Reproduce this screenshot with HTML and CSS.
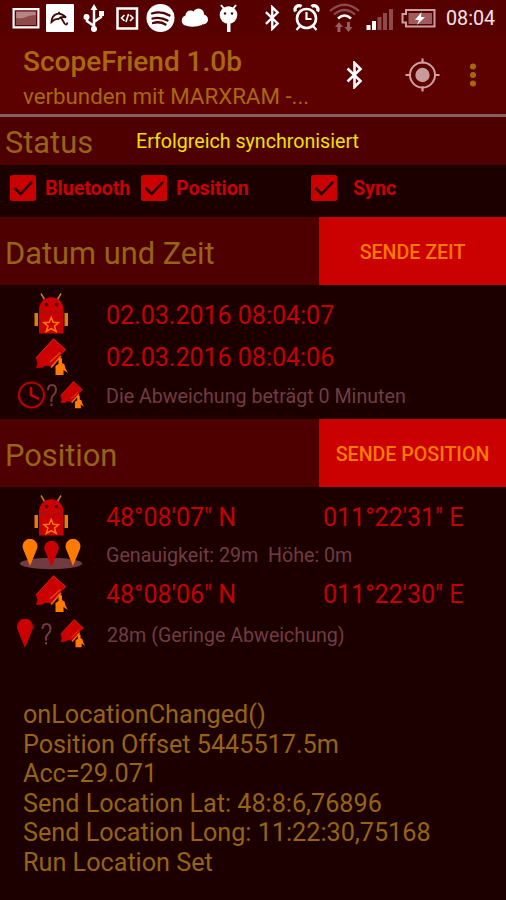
FILE: index.html
```html
<!DOCTYPE html>
<html lang="de">
<head>
<meta charset="utf-8">
<title>ScopeFriend</title>
<link rel="stylesheet" href="styles.css">
</head>
<body>
<svg class="defs" width="0" height="0">
  <symbol id="robot" viewBox="0 0 34 42">
    <path d="M7 1l3.500 6M27 1l-3.500 6" stroke="#c87a20" stroke-width="1.500"/>
    <path d="M5 17a12.200 12.200 0 0 1 24.500 0v24H5z" fill="#cb0000"/>
    <path d="M5 18q12 5 24.500 0" fill="none" stroke="#8c1c1c" stroke-width="1.200"/>
    <circle cx="12.500" cy="12" r="1.700" fill="#3a0000"/><circle cx="22.500" cy="12" r="1.700" fill="#3a0000"/>
    <path d="M.5 20.500h3.500v13H.5zM30.500 20.500H34v13h-3.500z" fill="#e07c10"/>
    <path d="M17.200 25l2 4.800 5.300.3-4 3.500 1.600 5.400-4.900-2.800-4.900 2.800 1.600-5.400-4-3.500 5.300-.3z" fill="none" stroke="#ff7a00" stroke-width="1.500"/>
  </symbol>
  <symbol id="scope" viewBox="0 0 33 38">
    <path d="M18.500.8L30.500 11.500 16.500 28.500 10.500 27.500 7.500 29.500 1 30 2.500 25 1 20z" fill="#cb0000"/>
    <path d="M1 20L18.500.8 30.500 11.500 28 14.500" fill="none" stroke="#dc2808" stroke-width="1"/>
    <path d="M25.500 14.500L15 24" stroke="#e84a10" stroke-width="1.200"/>
    <path d="M16 29.500L26 18" stroke="#e86a10" stroke-width="1.800"/>
    <path d="M23.500 19.500l3.500 1v4.500l2.500 1.500 1 4 2.500 4.500-4.500-3v5H20.500v-9l3-2z" fill="#ff7a00"/>
  </symbol>
  <symbol id="bt" viewBox="0 0 16 28">
    <path d="M1 7.500L14 20 8 26V2l6 6L1 20.500" fill="none" stroke="#fff" stroke-width="2.600"/>
  </symbol>
  <symbol id="pin" viewBox="0 0 16 29">
    <path d="M8 29L.9 11.500A8 8 0 1 1 15.100 11.500z"/>
  </symbol>
</svg>
<main class="screen">
  <div class="statusbar">
    <svg width="43" height="36" viewBox="0 0 43 36"><path d="M13.500 9h25v18.500h-25z" fill="#b98484" stroke="#fff" stroke-width="2"/><path d="M15.500 11h21v14.500h-21z" fill="none" stroke="#600000" stroke-width="1.200"/><path d="M16 18q6 1 10-1t10-2v10H16z" fill="#8c4c4c"/></svg>
    <svg width="35" height="36" viewBox="43 0 35 36"><rect x="46" y="4" width="28" height="28" rx="1" fill="#fff"/><path d="M51.500 22C52 14 59 10.500 66 17.500Q61 16 58.500 19 55 18.500 51.500 22zM58.500 12l1.500 2M61 17.500l3.500 6q2.200 2.500 3-1" fill="none" stroke="#3c0a0a" stroke-width="1.800"/></svg>
    <svg width="32" height="36" viewBox="78 0 32 36"><path d="M94 8v21M94 26l-7-5v-6M94 22l7-5v-4" fill="none" stroke="#fff" stroke-width="2.500"/><path d="M90.500 10L94 4l3.500 6z" fill="#fff"/><circle cx="94" cy="29" r="3" fill="#fff"/><circle cx="86.500" cy="17" r="3" fill="#fff"/><path d="M99 11h5v5h-5z" fill="#fff"/></svg>
    <svg width="32" height="36" viewBox="110 0 32 36"><path d="M117.500 8.500h19.500v20h-19.500z" fill="none" stroke="#fff" stroke-width="2.500"/><path d="M124.500 15l-3 3 3 3M130 15l3 3-3 3M128.500 14l-2.500 8" fill="none" stroke="#fff" stroke-width="1.600"/></svg>
    <svg width="36" height="36" viewBox="142 0 36 36"><circle cx="160.500" cy="18" r="14" fill="#fff"/><path d="M152 13.500q9-3 17.500 2M152.500 18.500q8-2 15 2M153 23q7-2 12.500 1.500" fill="none" stroke="#500000" stroke-width="2.300" stroke-linecap="round"/></svg>
    <svg width="36" height="36" viewBox="178 0 36 36"><g fill="#fff"><circle cx="187" cy="20.500" r="5.300"/><circle cx="190.500" cy="15.500" r="5"/><circle cx="198.500" cy="14" r="5.500"/><circle cx="203" cy="19.500" r="5"/><path d="M186 16h16v9q-8 3-15 1z"/></g></svg>
    <svg width="34" height="36" viewBox="214 0 34 36"><path d="M221 5l4 5M236 5l-4 5" stroke="#fff" stroke-width="2"/><circle cx="228.500" cy="15" r="8.800" fill="#fff"/><path d="M227 22h3.500v10H227z" fill="#fff"/><circle cx="225" cy="13.500" r="1.200" fill="#500000"/><circle cx="232" cy="13.500" r="1.200" fill="#500000"/></svg>
    <svg width="39" height="36" viewBox="248 0 39 36"><use href="#bt" x="265" y="5" width="14.500" height="26"/></svg>
    <svg width="37" height="36" viewBox="287 0 37 36"><circle cx="306.500" cy="18.500" r="9.500" fill="none" stroke="#fff" stroke-width="2.600"/><path d="M306.500 12v7h5M300 26l-3.500 4M313 26l3.500 4" fill="none" stroke="#fff" stroke-width="2.200"/><path d="M295.500 11.500a4 4 0 0 1 6-5M317.500 11.500a4 4 0 0 0-6-5" fill="none" stroke="#fff" stroke-width="3.200"/></svg>
    <svg width="38" height="36" viewBox="324 0 38 36"><g fill="none" stroke="#8d4a4a" stroke-width="2.200"><path d="M330 11q14.500-12.500 29 0M334 14.500q10.500-9 21 0"/></g><path d="M338 18.500q6.500-6 13 0" fill="none" stroke="#fff" stroke-width="2.500"/><path d="M335 27l4-5 4 5h-2.500v5h-3v-5zM344.500 27l4 5 4-5H350v-5h-3v5z" fill="#9a5c5c"/></svg>
    <svg width="35" height="36" viewBox="362 0 35 36"><path d="M366.500 25h4v5h-4zM372 21h4v9h-4z" fill="#fff"/><path d="M377.500 17h4v13h-4zM383 13h4v17h-4zM389 9h4v21h-4z" fill="#8d4a4a"/></svg>
    <svg width="43" height="36" viewBox="397 0 43 36"><path d="M406 10h28.500v16.500H406v-4h-3.500v-8.500h3.500z" fill="none" stroke="#c8a0a0" stroke-width="2"/><path d="M408.500 13h23.500v11h-23.500z" fill="#a05c5c"/><path d="M421.500 12l-6.500 8h4l-2 5 8-8h-4z" fill="#fff"/></svg>
    <time class="clock">08:04</time>
  </div>
  <header class="appbar">
    <div class="titles"><h1>ScopeFriend 1.0b</h1><p>verbunden mit MARXRAM -...</p></div>
    <svg width="186" height="77" viewBox="320 36 186 77">
      <use href="#bt" x="346" y="61" width="17" height="28"/>
      <g fill="none" stroke="#d0a0a0"><circle cx="422.500" cy="75" r="12.500" stroke-width="2"/><path d="M422.500 58.500v5M422.500 86.500v5M405.500 75h5M434.500 75h5" stroke-width="2.200"/></g><circle cx="422.500" cy="75" r="7.200" fill="#c99a9a"/>
      <g fill="#a8690c"><circle cx="473" cy="66.500" r="3"/><circle cx="473" cy="75" r="3"/><circle cx="473" cy="83.500" r="3"/></g>
    </svg>
  </header>
  <section class="status"><h2>Status</h2><span>Erfolgreich synchronisiert</span></section>
  <div class="checks">
    <div class="check"><svg class="box" viewBox="0 0 26 26"><rect width="26" height="26" rx="2.500" fill="#cb0000"/><path d="M4.500 13l6 6L22 7" fill="none" stroke="#1c0000" stroke-width="2.500"/></svg><span>Bluetooth</span></div>
    <div class="check"><svg class="box" viewBox="0 0 26 26"><rect width="26" height="26" rx="2.500" fill="#cb0000"/><path d="M4.500 13l6 6L22 7" fill="none" stroke="#1c0000" stroke-width="2.500"/></svg><span>Position</span></div>
    <div class="check sync"><svg class="box" viewBox="0 0 26 26"><rect width="26" height="26" rx="2.500" fill="#cb0000"/><path d="M4.500 13l6 6L22 7" fill="none" stroke="#1c0000" stroke-width="2.500"/></svg><span>Sync</span></div>
  </div>
  <section class="bar"><h2>Datum und Zeit</h2><button>SENDE ZEIT</button></section>
  <div class="row first"><svg width="106" height="51" viewBox="0 285 106 51"><use href="#robot" x="34" y="292.500" width="34" height="42"/></svg><span class="value">02.03.2016 08:04:07</span></div>
  <div class="row"><svg width="106" height="42" viewBox="0 336 106 42"><use href="#scope" x="35" y="338" width="33" height="38"/></svg><span class="value">02.03.2016 08:04:06</span></div>
  <div class="row diff"><svg width="106" height="41" viewBox="0 378 106 41"><circle cx="31.500" cy="395" r="12.500" fill="none" stroke="#b80000" stroke-width="2.200"/><path d="M31 387v8l8 4" fill="none" stroke="#cb0000" stroke-width="2.500"/><path d="M48 390q0-5 4-5t4 5q0 3-2.500 5t-2 7M51.500 403.500v2.500" fill="none" stroke="#703c42" stroke-width="2"/><use href="#scope" x="59" y="381" width="26" height="28"/></svg><span class="note">Die Abweichung beträgt 0 Minuten</span></div>
  <section class="bar"><h2>Position</h2><button>SENDE POSITION</button></section>
  <div class="row first"><svg width="106" height="51" viewBox="0 487 106 51"><use href="#robot" x="34" y="494.500" width="34" height="42"/></svg><span class="value">48°08'07" N</span><span class="value">011°22'31" E</span></div>
  <div class="row accuracy"><svg width="106" height="35" viewBox="0 538 106 35"><ellipse cx="51" cy="563.500" rx="31" ry="5.800" fill="#703c42"/><use href="#pin" x="22" y="539" width="16" height="27" fill="#ff7a00"/><use href="#pin" x="43.500" y="541" width="16" height="26" fill="#cb0000"/><use href="#pin" x="65" y="539" width="16" height="27" fill="#ff7a00"/></svg><span class="note">Genauigkeit: 29m&nbsp; Höhe: 0m</span></div>
  <div class="row"><svg width="106" height="42" viewBox="0 573 106 42"><use href="#scope" x="35" y="575" width="33" height="38"/></svg><span class="value">48°08'06" N</span><span class="value">011°22'30" E</span></div>
  <div class="row offset"><svg width="106" height="40" viewBox="0 615 106 40"><use href="#pin" x="17" y="619" width="16" height="29" fill="#cb0000"/><path d="M42.500 629q0-5 4-5t4 5q0 3-2.500 5t-2 6.500M46 642v2.500" fill="none" stroke="#703c42" stroke-width="2"/><use href="#scope" x="59" y="619" width="27" height="29"/></svg><span class="note">28m (Geringe Abweichung)</span></div>
  <div class="log">onLocationChanged()<br>Position Offset 5445517.5m<br>Acc=29.071<br>Send Location Lat: 48:8:6,76896<br>Send Location Long: 11:22:30,75168<br>Run Location Set</div>
</main>
</body>
</html>
```
FILE: styles.css
```css
* { box-sizing: border-box; }
body { margin: 0; background: #1c0000; font-family: Roboto, sans-serif; }
h1, h2, p { margin: 0; font-weight: 400; }
svg { display: block; flex: none; }
.defs { position: absolute; }
.screen { width: 506px; height: 900px; overflow: hidden; white-space: nowrap; color: #966414; }
.statusbar { display: flex; height: 36px; background: #560000; }
.clock { padding-left: 6px; font-size: 19.7px; line-height: 38px; color: #f4e4e4; }
.appbar { display: flex; height: 81px; background: #5c0000; border-bottom: 3px solid #866060; color: #a8690c; }
.titles { width: 320px; padding: 9px 0 0 23px; }
.titles h1 { font-size: 28px; font-weight: 500; line-height: 34px; }
.titles p { font-size: 22.300px; line-height: 34px; }
.status { display: flex; align-items: center; height: 48px; padding-left: 5px; background: #4e0000; }
.status h2 { width: 131px; font-size: 30.800px; padding-top: 2px; }
.status span { padding-top: 1px; font-size: 19.650px; color: #f0e000; }
.checks { display: flex; height: 52px; padding: 10px 0 0 10px; color: #cb0000; font-size: 19.600px; font-weight: 700; }
.check { display: flex; width: 131px; height: 26px; align-items: center; gap: 9px; }
.check span { padding-top: 1px; }
.check + .check { width: 170px; }
.check.sync { gap: 16px; }
.box { width: 26px; height: 26px; }
.bar { display: flex; height: 68px; background: #4e0000; }
.bar h2 { width: 319px; padding: 4px 0 0 5px; font-size: 30.800px; line-height: 66px; }
.bar button { flex: 1; padding: 2px 0 0; border: 0; background: #cb0000; color: #ff7a00; font: 500 19.600px Roboto, sans-serif; }
.row { display: flex; align-items: center; height: 42px; }
.row.first { height: 51px; }
.row.first .value { padding-top: 9px; }
.row.diff { height: 41px; }
.row.diff .note { padding-bottom: 5px; }
.row.accuracy { height: 35px; }
.row.offset { height: 40px; }
.row.offset .note { padding-left: 1px; }
.value { flex: none; width: 217px; font-size: 25px; color: #c40000; }
.row:not(.first) .value { padding-top: 1px; }
.note { font-size: 19.650px; color: #703c42; }
.log { padding: 45px 0 0 23px; font-size: 25.200px; line-height: 29.600px; }
```
